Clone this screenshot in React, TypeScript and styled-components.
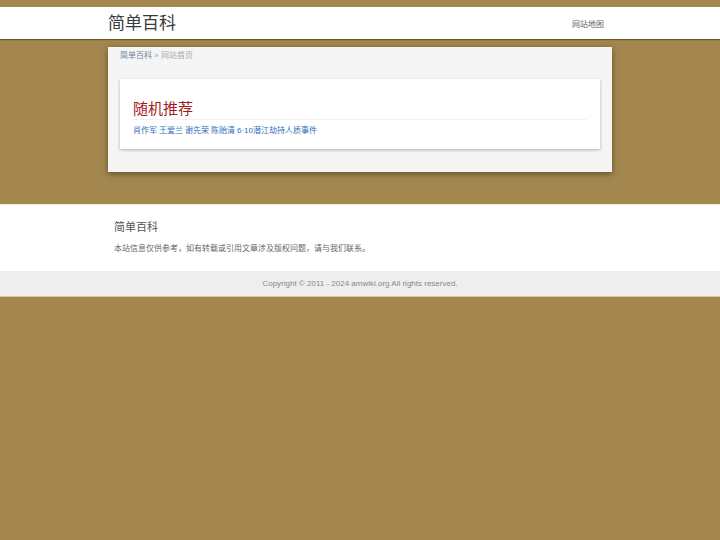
import React from 'react'
import styled, { createGlobalStyle } from 'styled-components'

const GlobalStyle = createGlobalStyle`
  html, body {
    margin: 0;
    padding: 0;
    background: #a3874e;
    font-family: "Liberation Sans", "Noto Sans CJK SC", sans-serif;
  }
  a { text-decoration: none; }
`

const Page = styled.div`
  padding-top: 7px;
  min-height: 533px;
`

const Header = styled.header`
  background: #fff;
  height: 32px;
  box-shadow: 0 1px 1px rgba(60, 40, 10, 0.5);
  position: relative;
  z-index: 1;
`

const Container = styled.div`
  width: 504px;
  margin: 0 auto;
  box-sizing: border-box;
`

const HeaderInner = styled(Container)`
  height: 100%;
  display: flex;
  align-items: center;
  justify-content: space-between;
`

const Logo = styled.a`
  font-size: 17px;
  color: #3a3a3a;
  line-height: 1;
`

const NavLink = styled.a`
  font-size: 8px;
  color: #666;
  margin-right: 8px;
`

const Main = styled(Container)`
  margin-top: 8px;
  background: #f5f5f5;
  padding: 4px 12px 23px;
  box-shadow: 0 2px 6px rgba(40, 25, 0, 0.5);
`

const Crumbs = styled.div`
  font-size: 8px;
  line-height: 10px;
  color: #aaa;
  margin-bottom: 18px;
`

const CrumbLink = styled.a`
  color: #71869a;
`

const Card = styled.section`
  background: #fff;
  padding: 21px 13px 11px;
  box-shadow: 0 1px 3px rgba(0, 0, 0, 0.28);
`

const CardTitle = styled.h2`
  margin: 0;
  font-size: 15px;
  font-weight: normal;
  color: #a31d1d;
  line-height: 18px;
  padding-bottom: 1px;
  border-bottom: 1px solid #f2f2f2;
`

const LinkList = styled.div`
  margin-top: 4px;
  font-size: 8px;
  line-height: 14px;
  display: flex;
  gap: 2px;
`

const Item = styled.a`
  color: #2f6fb8;
`

const Footer = styled.footer`
  margin-top: 32px;
  background: #fff;
  border-top: 1px solid #f0e8d8;
`

const FooterInner = styled(Container)`
  padding: 15px 6px 17px;
`

const FooterTitle = styled.div`
  font-size: 11px;
  color: #555;
  line-height: 14px;
`

const FooterText = styled.p`
  margin: 10px 0 0;
  font-size: 8px;
  color: #666;
  line-height: 10px;
`

const Copyright = styled.div`
  background: #eee;
  height: 25px;
  display: flex;
  align-items: center;
  justify-content: center;
  font-size: 8px;
  color: #888;
  border-bottom: 1px solid #d8c7a3;
`

const links = ['肖作军', '王爱兰', '谢先荣', '陈贻清', '6·10潜江劫持人质事件']

export default function App() {
  return (
    <>
      <GlobalStyle />
      <Page>
        <Header>
          <HeaderInner>
            <Logo href="/">简单百科</Logo>
            <NavLink href="/sitemap">网站地图</NavLink>
          </HeaderInner>
        </Header>
        <Main>
          <Crumbs>
            <CrumbLink href="/">简单百科</CrumbLink> » 网站首页
          </Crumbs>
          <Card>
            <CardTitle>随机推荐</CardTitle>
            <LinkList>
              {links.map((l) => (
                <Item key={l} href="#">{l}</Item>
              ))}
            </LinkList>
          </Card>
        </Main>
        <Footer>
          <FooterInner>
            <FooterTitle>简单百科</FooterTitle>
            <FooterText>本站信息仅供参考，如有转载或引用文章涉及版权问题，请与我们联系。</FooterText>
          </FooterInner>
          <Copyright>Copyright © 2011 - 2024 amwiki.org All rights reserved.</Copyright>
        </Footer>
      </Page>
    </>
  )
}
